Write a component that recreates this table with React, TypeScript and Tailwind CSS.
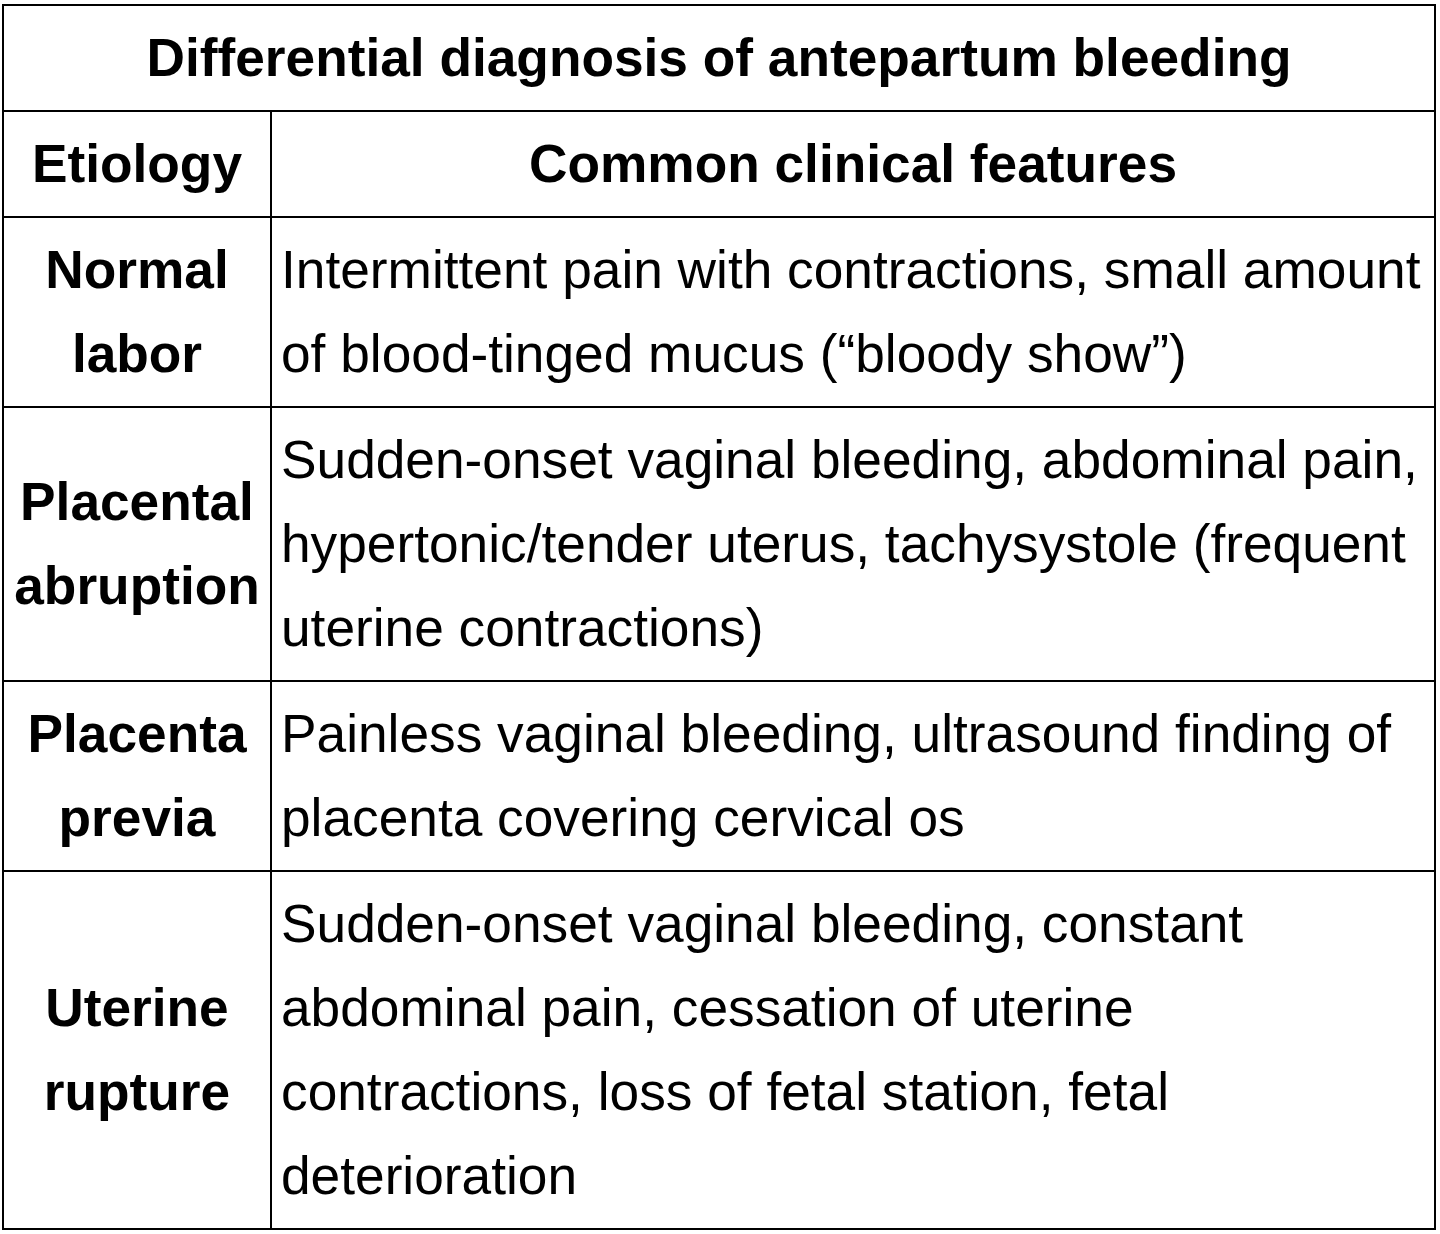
import React from 'react';

const rows: { etiology: string; features: string }[] = [
	{
		etiology: 'Normal labor',
		features: 'Intermittent pain with contractions, small amount of blood-tinged mucus (\u201cbloody show\u201d)',
	},
	{
		etiology: 'Placental abruption',
		features:
			'Sudden-onset vaginal bleeding, abdominal pain, hypertonic/tender uterus, tachysystole (frequent uterine contractions)',
	},
	{
		etiology: 'Placenta previa',
		features: 'Painless vaginal bleeding, ultrasound finding of placenta covering cervical os',
	},
	{
		etiology: 'Uterine rupture',
		features:
			'Sudden-onset vaginal bleeding, constant abdominal pain, cessation of uterine contractions, loss of fetal station, fetal deterioration',
	},
];

export default function App(): React.ReactElement {
	return (
		<div className="min-h-[1234px] bg-white pt-[4px] pl-[2px] font-['Liberation_Sans',Arial,sans-serif] text-[53.25px] leading-[84px] text-black">
			<table className="w-[1434px] table-fixed border-collapse border-2 border-black">
				<colgroup>
					<col className="w-[268px]" />
					<col />
				</colgroup>
				<thead>
					<tr>
						<th className="border-2 border-black px-[10px] py-[10px] text-center font-bold" colSpan={2}>
							Differential diagnosis of antepartum bleeding
						</th>
					</tr>
					<tr>
						<th className="border-2 border-black px-0 py-[10px] text-center font-bold">Etiology</th>
						<th className="border-2 border-black px-[10px] py-[10px] text-center font-bold">Common clinical features</th>
					</tr>
				</thead>
				<tbody>
					{rows.map((row) => (
						<tr key={row.etiology}>
							<td className="border-2 border-black px-0 py-[10px] text-center align-middle font-bold">{row.etiology}</td>
							<td className="border-2 border-black py-[10px] pr-[6px] pl-[9px] text-left align-middle">{row.features}</td>
						</tr>
					))}
				</tbody>
			</table>
		</div>
	);
}
